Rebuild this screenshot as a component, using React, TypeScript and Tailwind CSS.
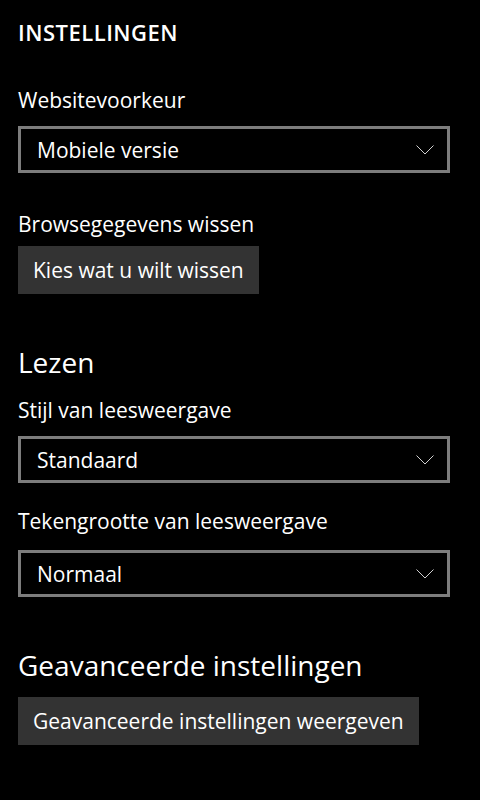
import React from "react";

const font = { fontFamily: '"Open Sans", "Noto Sans", sans-serif' };

const Chevron = () => (
  <svg width="18" height="10" viewBox="0 0 18 10" fill="none">
    <path d="M0.5 0.5 L9 9 L17.5 0.5" stroke="#d0d0d0" strokeWidth="1" />
  </svg>
);

const Label: React.FC<{ children: React.ReactNode; className?: string }> = ({
  children,
  className = "",
}) => (
  <div className={`text-[21px] leading-[28px] text-white ${className}`}>{children}</div>
);

const Select: React.FC<{ value: string; className?: string }> = ({ value, className = "mt-[12px]" }) => (
  <div
    className={`flex h-[47px] w-[432px] items-center justify-between border-[3px] border-[#7d7d7d] pl-[16px] pr-[13px] ${className}`}
  >
    <span className="text-[21px] leading-[28px] text-white">{value}</span>
    <Chevron />
  </div>
);

const Button: React.FC<{ children: React.ReactNode; className?: string }> = ({
  children,
  className = "mt-[8px]",
}) => (
  <button
    type="button"
    className={`flex h-[48px] items-center bg-[#333333] px-[15px] text-[21px] leading-[28px] text-white ${className}`}
  >
    {children}
  </button>
);

const Heading: React.FC<{ children: React.ReactNode; className?: string }> = ({
  children,
  className = "",
}) => (
  <div className={`text-[28px] leading-[36px] text-white ${className}`}>{children}</div>
);

export default function App() {
  return (
    <div className="min-h-[800px] w-[480px] bg-black px-[18px] pt-[17px]" style={font}>
      {/* Titel */}
      <div className="text-[22px] font-semibold leading-[30px] tracking-[0.5px] text-white">
        INSTELLINGEN
      </div>

      <Label className="mt-[39px]">Websitevoorkeur</Label>
      <Select value="Mobiele versie" />

      <Label className="mt-[37px]">Browsegegevens wissen</Label>
      <Button>Kies wat u wilt wissen</Button>

      {/* Lezen */}
      <Heading className="mt-[50px]">Lezen</Heading>
      <Label className="mt-[16px]">Stijl van leesweergave</Label>
      <Select value="Standaard" />

      <Label className="mt-[24px]">Tekengrootte van leesweergave</Label>
      <Select value="Normaal" className="mt-[15px]" />

      {/* Geavanceerd */}
      <Heading className="mt-[50px]">Geavanceerde instellingen</Heading>
      <Button className="mt-[14px]">Geavanceerde instellingen weergeven</Button>
    </div>
  );
}
